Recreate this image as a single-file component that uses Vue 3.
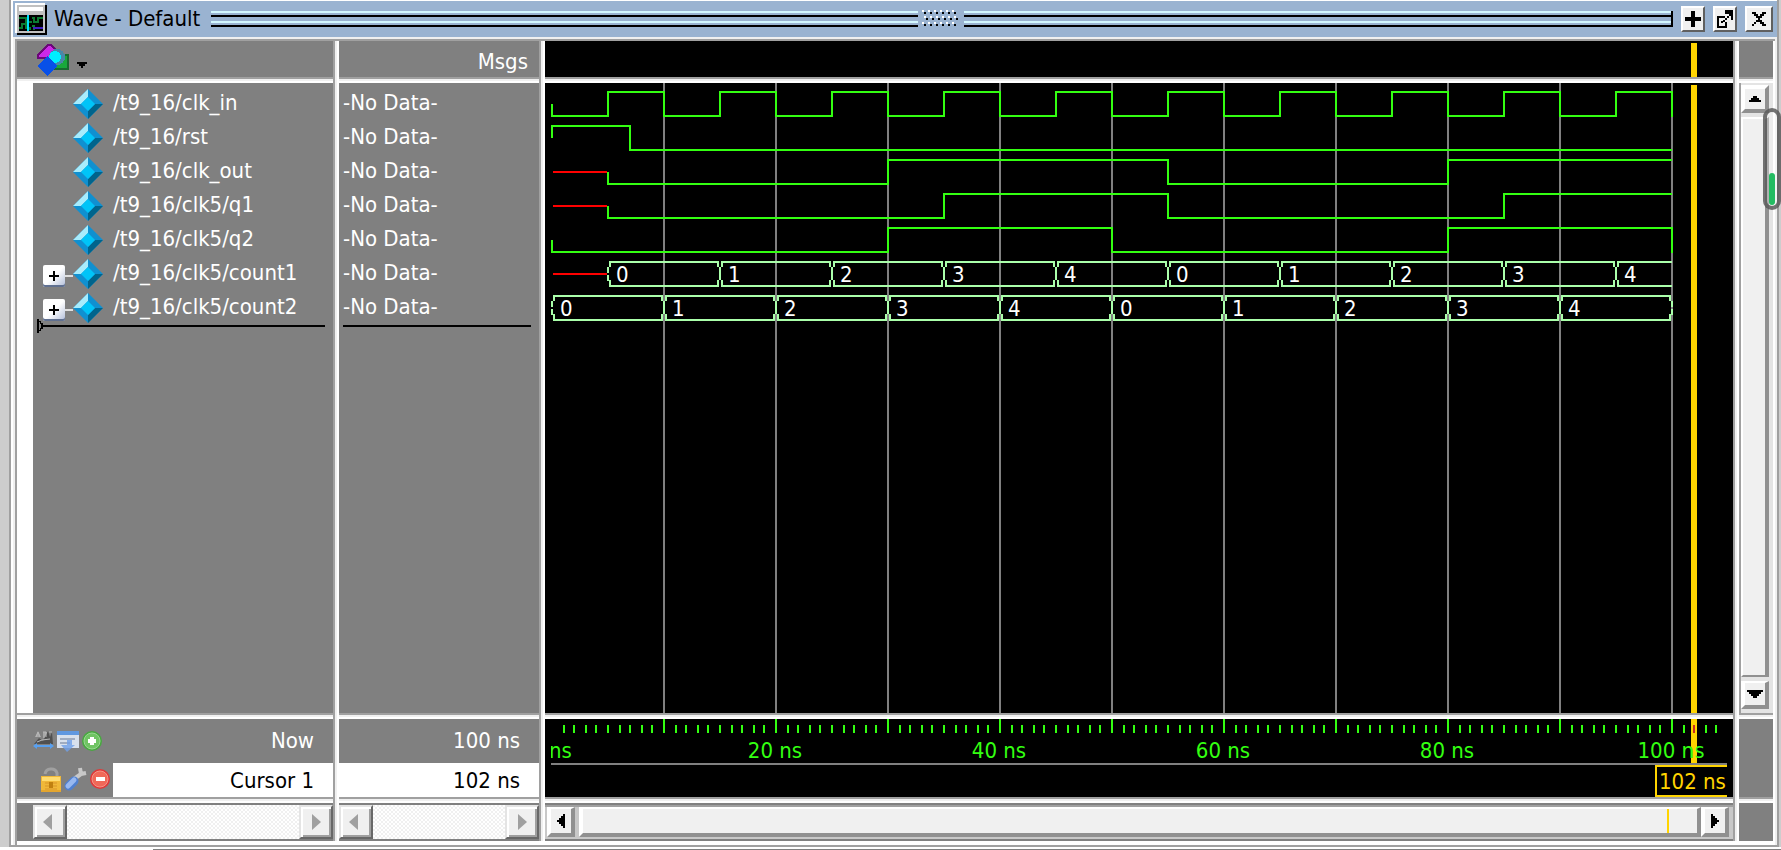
<script setup>
const PX_PER_NS = 11.2
const X0 = 7
const snap = (t) => 2 * Math.round((X0 + t * PX_PER_NS - 1) / 2) + 1

const signals = [
  { name: '/t9_16/clk_in', levels: [[0, 0], ...Array.from({ length: 19 }, (_, i) => [(i + 1) * 5, (i + 1) % 2])], start: true, end: true },
  { name: '/t9_16/rst', levels: [[0, 1], [7, 0]], start: true },
  { name: '/t9_16/clk_out', levels: [[5, 0], [30, 1], [55, 0], [80, 1]], unknown: 5 },
  { name: '/t9_16/clk5/q1', levels: [[5, 0], [35, 1], [55, 0], [85, 1]], unknown: 5 },
  { name: '/t9_16/clk5/q2', levels: [[0, 0], [30, 1], [50, 0], [80, 1]], start: true, end: true },
  { name: '/t9_16/clk5/count1', bus: true, first: 5, unknown: 5 },
  { name: '/t9_16/clk5/count2', bus: true, first: 0, end: true }
]

function levelPath(sig, row) {
  const high = 9 + 34 * row
  const mid = high + 12
  const low = high + 24
  const y = (v) => (v ? high : low)
  const pts = sig.levels
  let d = `M${snap(pts[0][0])} ${mid}V${y(pts[0][1])}`
  pts.slice(1).forEach(([t, v]) => {
    d += `H${snap(t)}V${y(v)}`
  })
  d += `H${snap(100)}`
  if (sig.end) d += `V${low + 1}`
  return d
}

function busPath(sig, row) {
  const top = 9 + 34 * row
  const bottom = top + 24
  let d = ''
  for (let t = sig.first; t < 100; t += 10) {
    const a = snap(t)
    const b = snap(Math.min(t + 10, 100))
    const closed = t + 10 < 100 || sig.end
    const r = closed ? b - 2 : b
    d += `M${a + 2} ${top + 5}V${top}H${r}`
    if (closed) d += `V${top + 5}`
    d += `M${a + 2} ${bottom - 6}V${bottom}H${r}`
    if (closed) d += `V${bottom - 6}`
    d += t === sig.first
      ? `M${a} ${top + 5}V${top + 11}M${a} ${top + 13}V${top + 19}`
      : `M${a} ${top + 5}V${top + 18}`
  }
  if (sig.end) d += `M${snap(100)} ${top + 5}V${top + 11}M${snap(100)} ${top + 13}V${top + 19}`
  return d
}

const busLabels = (sig) =>
  Array.from({ length: 10 }, (_, i) => ({ x: snap(sig.first + i * 10) + 8, text: i % 5 }))

const gridLines = Array.from({ length: 10 }, (_, i) => snap((i + 1) * 10))
const ticks = Array.from({ length: 104 }, (_, i) => ({ t: i + 1, x: snap(i + 1), major: (i + 1) % 10 === 0 }))
const timeLabels = [0, 20, 40, 60, 80, 100]
const cursorX = snap(102)
</script>

<template>
  <div class="desktop">
    <main class="window">
      <header class="titlebar">
        <svg class="app-icon" width="32" height="32" shape-rendering="crispEdges" aria-hidden="true">
          <path fill="#000" d="M2 2H32V32H2z" />
          <path fill="#fff" d="M0 0H30V30H0z" />
          <path fill="#c0c0c0" d="M2 2H30V30H2z" />
          <path fill="#fff" d="M4 4H28V8H4z" />
          <path fill="#000" d="M4 12H28V28H4z" />
          <path fill="none" stroke="#0a7a30" stroke-width="2" d="M4 15H11V19H17M17 15H19V19H23V15H28M4 25H7V21H11V25H15V27M17 23H19V27" />
          <path fill="#4020c0" d="M18 24H28V26H18z" />
          <path fill="#00e0ff" d="M12 12H14V28H12z" />
        </svg>
        <h1>Wave - Default</h1>
        <div class="grip"></div>
        <svg class="dots" width="38" height="18" shape-rendering="crispEdges" aria-hidden="true">
          <g v-for="r in 3" :key="r">
            <template v-for="c in 6" :key="c">
              <rect :x="(c - 1) * 6 + (r === 2 ? 2 : 0)" :y="(r - 1) * 6" width="2" height="2" fill="#fff" />
              <rect :x="(c - 1) * 6 + (r === 2 ? 4 : 2)" :y="(r - 1) * 6 + 2" width="2" height="2" fill="#000" />
            </template>
          </g>
        </svg>
        <div class="grip grip-end"></div>
        <div class="win-buttons">
          <button aria-label="Add">
            <svg width="20" height="22" shape-rendering="crispEdges"><path d="M8 3H12V9H18V13H12V19H8V13H2V9H8z" /></svg>
          </button>
          <button aria-label="Undock">
            <svg width="20" height="22" shape-rendering="crispEdges"><path fill-rule="evenodd" d="M2 8H10V10H8V10H4V18H10V14H12V20H2zM6 13H8V15H6zM10 2H18V12H16V8H14V10H12V12H10V14H8V12H10V10H12V8H14V6H10z" /></svg>
          </button>
          <button aria-label="Close">
            <svg width="22" height="22" shape-rendering="crispEdges"><path d="M4 4H8V6H10V8H12V6H14V4H18V6H16V8H14V10H12V12H14V14H16V16H18V18H14V16H12V14H10V14H8V16H6V18H4V16H6V14H8V12H10V10H8V8H6V6H4z" /></svg>
          </button>
        </div>
      </header>

      <div class="panes">
        <i class="sash h row2"></i><i class="sash h row4"></i><i class="sash h row6"></i>
        <i class="sash v col2"></i><i class="sash v col4"></i><i class="sash v col6"></i>

        <div class="cell head tools">
          <button class="filter" aria-label="Object filter">
            <svg width="54" height="34" aria-hidden="true">
              <g shape-rendering="crispEdges">
                <path fill="#cc28e8" stroke="#6b0878" stroke-width="2" d="M1 11L11 1H14L19 6L14 14H1z" />
                <path fill="#18a83c" stroke="#186a30" stroke-width="2" d="M18 11H31V25H18z" />
                <circle cx="20" cy="13" r="8" fill="#4888a8" />
                <circle cx="18" cy="13" r="6" fill="#00eeff" />
                <path fill="#0850e8" d="M10 12L20 22L10 32L0 22z" />
                <path d="M40 18H50V20H48V22H46V24H44V22H42V20H40z" />
              </g>
            </svg>
          </button>
        </div>
        <div class="cell head msgs">Msgs</div>
        <div class="cell head black">
          <svg class="plot" aria-hidden="true"><rect :x="cursorX - 3" y="2" width="6" height="34" fill="#ffd400" /></svg>
        </div>
        <div class="cell head corner"></div>

        <div class="cell body names">
          <ul>
            <li v-for="s in signals" :key="s.name">
              <button v-if="s.bus" class="expand" :aria-label="'Expand ' + s.name">
                <svg width="22" height="22" shape-rendering="crispEdges"><path d="M10 6H12V10H16V12H12V16H10V12H6V10H10z" /></svg>
              </button>
              <span v-if="s.bus" class="branch"></span>
              <svg class="gem" width="30" height="30" aria-hidden="true">
                <path fill="#1090d0" d="M15 0L30 15L15 30L0 15z" />
                <path fill="#a8ecfc" d="M15 0V8L8 15H0z" />
                <path fill="#00648c" d="M30 15H22L15 22V30z" />
                <path fill="#00c4f8" d="M15 8L22 15L15 22L8 15z" />
              </svg>
              <span class="label">{{ s.name }}</span>
            </li>
          </ul>
          <div class="insert">
            <svg width="6" height="14" shape-rendering="crispEdges" aria-hidden="true"><path d="M0 0H2V2H4V4H6V10H4V12H2V14H0zM2 3V11H3V9H4V5H3V3z" fill-rule="evenodd" /></svg>
            <hr />
          </div>
        </div>
        <div class="cell body values">
          <ul>
            <li v-for="s in signals" :key="s.name"><span class="label">-No Data-</span></li>
          </ul>
          <div class="insert"><hr /></div>
        </div>
        <div class="cell body black">
          <svg class="plot" role="img" aria-label="Waveforms">
            <rect v-for="x in gridLines" :key="x" :x="x - 1" y="0" width="2" height="100%" fill="#808080" />
            <g v-for="(s, i) in signals" :key="s.name">
              <path v-if="s.unknown" class="wave" stroke="#f00" :d="`M${X0 + 1} ${21 + 34 * i}H${snap(s.unknown) - 1}`" />
              <path v-if="!s.bus" class="wave" stroke="#33ff11" :d="levelPath(s, i)" />
              <template v-else>
                <path class="wave" stroke="#aaffaa" :d="busPath(s, i)" />
                <text v-for="l in busLabels(s)" :key="l.x" :x="l.x" :y="29 + 34 * i" fill="#fff">{{ l.text }}</text>
              </template>
            </g>
            <rect :x="cursorX - 3" y="2" width="6" height="100%" fill="#ffd400" />
          </svg>
        </div>
        <div class="cell body vscroll">
          <button aria-label="Scroll up"><svg width="12" height="6" shape-rendering="crispEdges"><path d="M4 0H8V2H10V4H12V6H0V4H2V2H4z" /></svg></button>
          <div class="thumb"></div>
          <button aria-label="Scroll down"><svg width="16" height="8" shape-rendering="crispEdges"><path d="M0 0H16V2H14V4H12V6H10V8H6V6H4V4H2V2H0z" /></svg></button>
        </div>

        <div class="cell foot labels">
          <div class="now">
            <div class="icons">
              <svg width="22" height="22" aria-hidden="true">
                <path fill="#a8a8a8" d="M2 7L5 1L8 7M10 2H14V8H10z" />
                <path fill="#505050" d="M1 14L6 8L10 11L15 1L17 7L19 2L20 14z" />
                <path fill="none" stroke="#b8b8b8" d="M3 7L5 2L7 7M10 2H13V7M16 2H19M4 12L9 10L17 9" />
                <path fill="#58a0f0" d="M0 16L4 13V15H17V13L21 16L17 19V17H4V19z" />
              </svg>
              <svg width="24" height="22" aria-hidden="true">
                <path fill="#d8e0ec" d="M1 2H23V18H1z" />
                <path fill="#6098e0" d="M1 1H23V5H1z" />
                <path stroke="#a0acc0" stroke-width="2" d="M4 9H19M4 13H14" />
                <path fill="#70a0e8" d="M11 10H16V15H19L11 22L5 15H11z" opacity=".8" />
              </svg>
              <svg width="22" height="22" aria-hidden="true">
                <circle cx="11" cy="11" r="10" fill="#48a840" />
                <circle cx="11" cy="11" r="8" fill="#70c464" stroke="#98d890" />
                <path fill="#fff" d="M9 7H13V9H15V13H13V15H9V13H7V9H9z" />
              </svg>
            </div>
            <span>Now</span>
          </div>
          <div class="cursor">
            <div class="icons">
              <svg width="24" height="26" aria-hidden="true">
                <path fill="none" stroke="#a0a0a0" stroke-width="3" d="M6 7C7 1 16 0 18 6V10" />
                <path fill="#f0b838" d="M2 9H22V25H2z" />
                <path fill="#ffdc70" d="M3 10H21V14H3z" />
                <path fill="none" stroke="#d89428" stroke-width="1" d="M2 24H22M6 16H18M6 19H18M6 22H18" />
                <path fill="#c08010" d="M10 15H14V21H10z" />
              </svg>
              <svg width="25" height="26" aria-hidden="true">
                <path fill="none" stroke="#c8c8c8" stroke-width="4" d="M11 12L18 7L23 6M18 7L17 1" />
                <path stroke="#5080d0" stroke-width="9" stroke-linecap="round" d="M6 19L11 14" />
                <path stroke="#98b8f0" stroke-width="5" stroke-linecap="round" d="M5 19L11 13" />
              </svg>
              <svg width="23" height="26" aria-hidden="true">
                <circle cx="12" cy="12" r="10" fill="#e03838" />
                <circle cx="12" cy="12" r="8" fill="#f06858" stroke="#f49488" />
                <path fill="#fff" d="M8 10H17V14H8z" />
              </svg>
            </div>
            <span>Cursor 1</span>
          </div>
        </div>
        <div class="cell foot times">
          <div class="now"><span>100 ns</span></div>
          <div class="cursor"><span>102 ns</span></div>
        </div>
        <div class="cell foot black">
          <svg class="plot ruler" role="img" aria-label="Timeline">
            <g transform="translate(-6 0)">
              <rect :x="cursorX - 3" y="0" width="6" height="44" fill="#ffd400" />
              <rect v-for="k in ticks" :key="k.t" :x="k.x - 1" :y="k.major ? 0 : 6" width="2" :height="k.major ? 14 : 8" :fill="k.t === 102 ? '#cc2a22' : '#33ff11'" />
              <text v-for="t in timeLabels" :key="t" :x="snap(t) - 1" y="39" text-anchor="middle" fill="#33ff11">{{ t }} ns</text>
            </g>
            <rect y="44" width="100%" height="2" fill="#808080" />
            <path fill="#000" d="M1104 46H1182V78H1104z" />
            <path class="wave" stroke="#ffd400" d="M1182 47H1105V77H1182" />
            <text x="1108" y="70" fill="#ffd400">102 ns</text>
          </svg>
        </div>
        <div class="cell foot corner"></div>

        <div class="cell bottom disabled indent">
          <button disabled aria-label="Scroll names left"><svg width="16" height="16"><path d="M10 0V16L1 8z" /></svg></button>
          <div class="trough"></div>
          <button disabled aria-label="Scroll names right"><svg width="12" height="16"><path d="M2 0V16L11 8z" /></svg></button>
        </div>
        <div class="cell bottom disabled">
          <button disabled aria-label="Scroll values left"><svg width="16" height="16"><path d="M10 0V16L1 8z" /></svg></button>
          <div class="trough"></div>
          <button disabled aria-label="Scroll values right"><svg width="12" height="16"><path d="M2 0V16L11 8z" /></svg></button>
        </div>
        <div class="cell bottom hscroll">
          <button aria-label="Scroll waves left"><svg width="8" height="14" shape-rendering="crispEdges"><path d="M6 0H8V14H6V12H4V10H2V8H0V6H2V4H4V2H6z" /></svg></button>
          <div class="thumb"><span class="mark"></span></div>
          <button aria-label="Scroll waves right"><svg width="8" height="14" shape-rendering="crispEdges"><path d="M0 0H2V2H4V4H6V6H8V8H6V10H4V12H2V14H0z" /></svg></button>
        </div>
        <div class="cell bottom corner"></div>
      </div>
    </main>
    <div class="status-edge"></div>
    <div class="float-bar"><span></span></div>
  </div>
</template>

<style>
body {
  margin: 0;
  background: #cdcdcd;
}
</style>

<style scoped>
.desktop {
  position: relative;
  box-sizing: border-box;
  height: 100vh;
  padding-left: 9px;
  display: flex;
  flex-direction: column;
  overflow: hidden;
  background: #cdcdcd;
  font-family: "DejaVu Sans Condensed", "DejaVu Sans", sans-serif;
  font-size: 22px;
  color: #fff;
}
.window {
  flex: 1;
  min-height: 0;
  display: flex;
  flex-direction: column;
  border-left: 2px solid #a0a0a0;
  border-right: 2px solid #a0a0a0;
  border-bottom: 2px solid #a0a0a0;
  margin-right: 2px;
  padding: 1px 0 0 2px;
  background: #fff;
}
.status-edge {
  height: 3px;
  margin-left: -9px;
  background: linear-gradient(90deg, #fff 153px, #808080 153px) bottom / 100% 1px no-repeat, #fff;
}
button {
  padding: 0;
  border: 0;
  border-radius: 0;
  font: inherit;
  display: flex;
  align-items: center;
  justify-content: center;
}
svg {
  display: block;
}
.titlebar {
  display: flex;
  align-items: center;
  height: 36px;
  padding: 0 4px 0 2px;
  background: #9ab3d1;
  color: #000;
}
.titlebar h1 {
  margin: 0 11px 0 7px;
  font-size: 22px;
  font-weight: 400;
  line-height: 32px;
  white-space: nowrap;
}
.grip {
  flex: 1;
  height: 16px;
  background: linear-gradient(#d4f8ff 2px, transparent 2px 4px, #000 4px 6px, transparent 6px 10px, #d4f8ff 10px 12px, transparent 12px 14px, #000 14px);
}
.grip-end {
  border-right: 2px solid #000;
}
.dots {
  margin: 0 4px;
}
.win-buttons {
  display: flex;
  gap: 8px;
  margin-left: 8px;
}
.win-buttons button {
  width: 24px;
  height: 26px;
  background: #f0f0f0;
  border: 2px solid #fff;
  border-right-color: #606060;
  border-bottom-color: #606060;
}
.win-buttons button:last-child {
  width: 28px;
}
.panes {
  flex: 1;
  min-height: 0;
  display: grid;
  grid-template-columns: 316px 6px 200px 6px minmax(0, 1fr) 6px 34px;
  grid-template-rows: 36px 6px minmax(0, 1fr) 6px 78px 6px 38px;
  border: 2px solid #f0f0f0;
  border-bottom: 0;
  padding: 2px 2px 4px 2px;
  background: linear-gradient(#a0a0a0, #a0a0a0) left / 2px 100% no-repeat,
    linear-gradient(#a0a0a0, #a0a0a0) top / 100% 2px no-repeat, #fff;
}
.sash {
  display: block;
}
.h {
  grid-column: 1 / -1;
  background: linear-gradient(#a0a0a0 2px, #f0f0f0 2px 4px, #fff 4px);
}
.v {
  grid-row: 1 / -1;
  background: linear-gradient(90deg, #a0a0a0 2px, #f0f0f0 2px 4px, #fff 4px);
}
.row2 { grid-row: 2; }
.row4 { grid-row: 4; }
.row6 { grid-row: 6; }
.col2 { grid-column: 2; }
.col4 { grid-column: 4; }
.col6 { grid-column: 6; }
.cell {
  min-width: 0;
  min-height: 0;
  overflow: hidden;
  background: #808080;
}
.head { grid-row: 1; }
.body { grid-row: 3; }
.foot { grid-row: 5; }
.bottom { grid-row: 7; }
.tools, .names, .labels, .indent { grid-column: 1; }
.msgs, .values, .times, .disabled:not(.indent) { grid-column: 3; }
.black, .hscroll { grid-column: 5; }
.corner, .vscroll { grid-column: 7; }
.black {
  background: #000;
}
.filter {
  margin: 3px 0 0 20px;
  background: none;
}
.msgs {
  padding-right: 11px;
  line-height: 42px;
  text-align: right;
}
.plot {
  width: 100%;
  height: 100%;
}
.wave {
  fill: none;
  stroke-width: 2;
  shape-rendering: crispEdges;
}
ul {
  margin: 0;
  padding: 4px 0 0;
  list-style: none;
}
li {
  height: 34px;
  white-space: nowrap;
}
.label {
  display: block;
  height: 34px;
  line-height: 32px;
}
.names {
  border-left: 16px solid #fff;
}
.names li {
  display: flex;
  align-items: center;
  justify-content: flex-start;
  padding-left: 10px;
}
.names li > .gem:first-child {
  margin-left: 30px;
}
.gem {
  margin-right: 10px;
}
.expand {
  width: 22px;
  height: 22px;
  margin-top: 4px;
  border-radius: 2px;
  background: linear-gradient(135deg, #fff 50%, #b0bcd8);
  box-shadow: inset 0 -2px #607090;
}
.branch {
  width: 8px;
  height: 2px;
  margin-top: 4px;
  background: #e0e0e0;
}
.values ul {
  padding-left: 4px;
}
.insert {
  display: flex;
  align-items: center;
  height: 14px;
  margin-top: -6px;
  padding: 0 8px 0 4px;
}
.insert hr {
  flex: 1;
  height: 2px;
  margin: 0;
  border: 0;
  background: #000;
}
.now,
.cursor {
  display: flex;
  align-items: stretch;
  justify-content: flex-end;
  text-align: right;
}
.now {
  height: 44px;
  line-height: 44px;
}
.cursor {
  height: 34px;
  line-height: 36px;
}
.now span,
.cursor span {
  flex: 1;
  padding-right: 19px;
}
.cursor span {
  background: #fff;
  color: #000;
}
.icons {
  display: flex;
}
.now .icons {
  gap: 1px;
  padding: 11px 0 0 16px;
}
.cursor .icons {
  width: 74px;
  padding: 4px 0 0 22px;
}
.ruler {
  width: calc(100% - 12px);
  margin-left: 6px;
}
.bottom {
  display: flex;
}
.indent {
  padding-left: 16px;
}
.disabled {
  padding-top: 2px;
  padding-bottom: 2px;
}
.disabled button {
  width: 34px;
  background: #f0f0f0;
  border: 2px solid #e4e4e4;
  border-right-color: #686868;
  border-bottom-color: #686868;
  box-shadow: inset 2px 2px #fff, inset -2px -2px #a0a0a0;
}
.disabled svg {
  fill: #a0a0a0;
}
.trough {
  flex: 1;
  background: repeating-conic-gradient(#fff 0 25%, #f0f0f0 0 50%) 0 0 / 4px 4px;
}
.hscroll {
  padding: 4px 4px 2px 2px;
  border-bottom: 2px solid #808080;
  background: linear-gradient(#808080 2px, #a0a0a0 2px 4px, #c8c8c8 4px);
}
.hscroll button,
.hscroll .thumb,
.vscroll button,
.vscroll .thumb {
  background: #f0f0f0;
  border: 4px solid #909090;
  border-top: 2px solid #fff;
  border-left: 4px solid #fff;
}
.hscroll button {
  width: 28px;
}
.hscroll .thumb {
  flex: 1;
  display: flex;
  justify-content: flex-end;
  margin-left: 4px;
}
.mark {
  width: 2px;
  margin-right: 28px;
  background: #ffd400;
}
.vscroll {
  display: flex;
  flex-direction: column;
  gap: 4px;
  padding: 2px 4px 4px 2px;
  background: linear-gradient(90deg, #a0a0a0 2px, #e4e4e4 2px);
}
.vscroll button {
  height: 28px;
}
.vscroll button:first-child {
  border-top-width: 4px;
}
.vscroll .thumb {
  flex: 1;
  border-left-width: 2px;
  border-bottom-width: 2px;
}
.float-bar {
  position: absolute;
  top: 108px;
  right: 0;
  box-sizing: border-box;
  width: 18px;
  height: 102px;
  display: flex;
  align-items: flex-end;
  justify-content: center;
  padding-bottom: 1px;
  border: 4px solid rgba(80, 80, 80, 0.8);
  border-radius: 9px;
  background: rgba(255, 255, 255, 0.3);
}
.float-bar span {
  width: 6px;
  height: 32px;
  border-radius: 3px;
  background: #24bc62;
}
</style>
